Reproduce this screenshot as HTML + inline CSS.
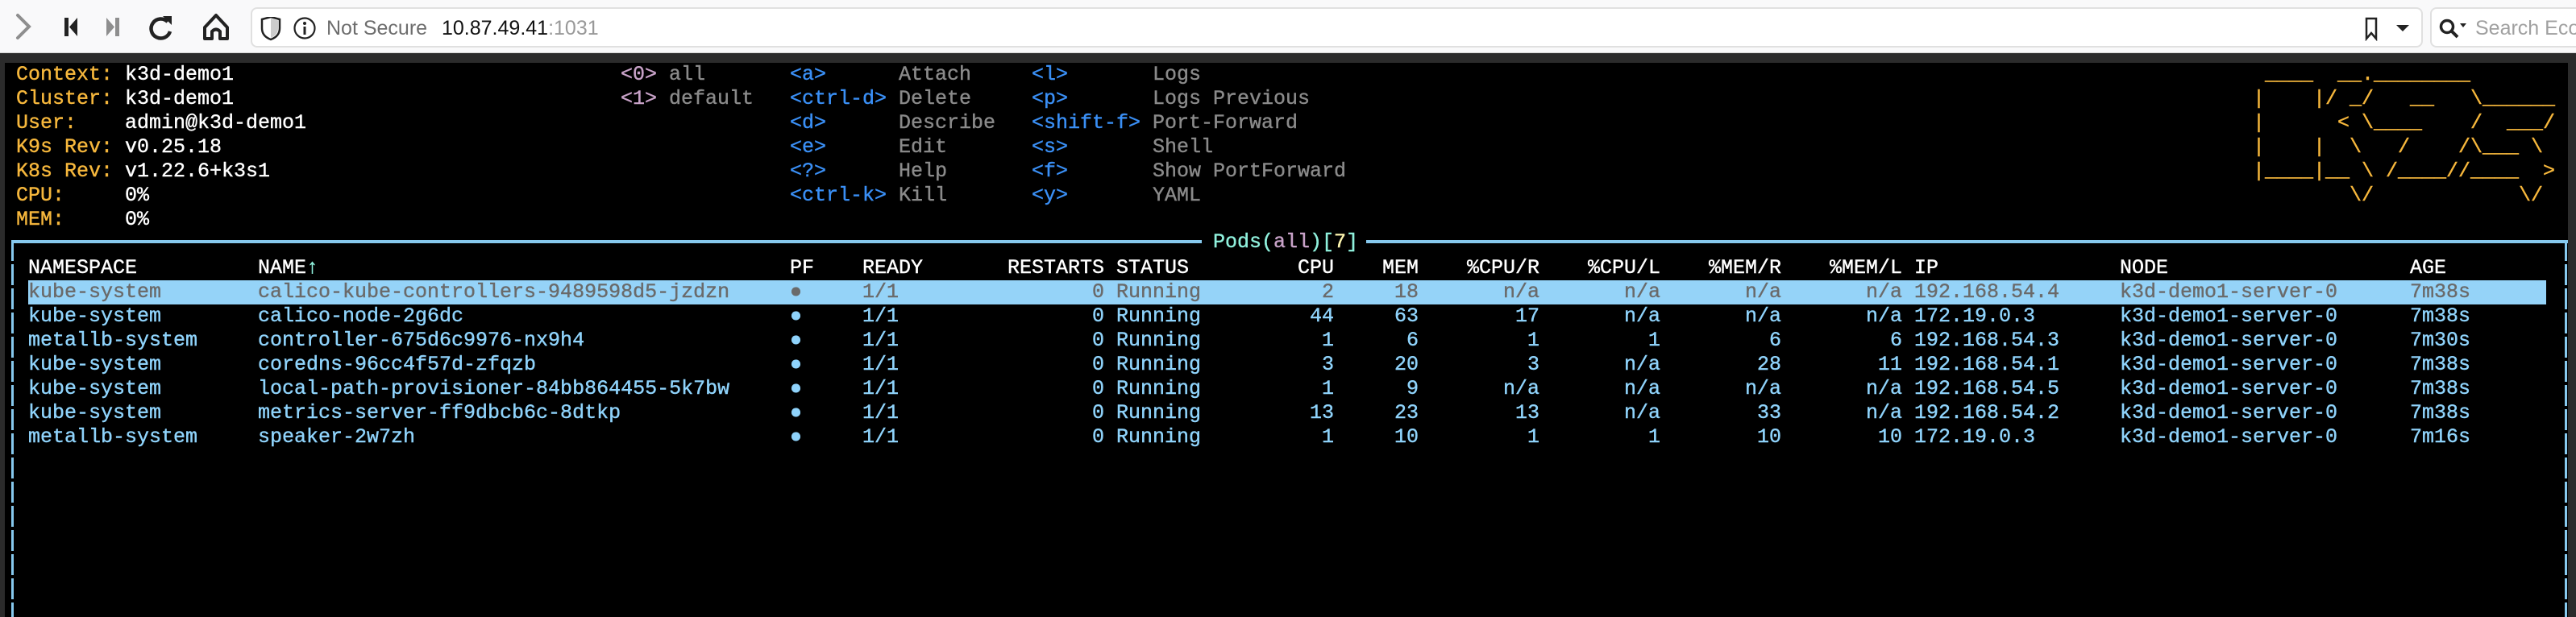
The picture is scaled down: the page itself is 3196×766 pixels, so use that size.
<!DOCTYPE html>
<html><head><meta charset="utf-8"><style>
*{margin:0;padding:0;box-sizing:border-box}
body{width:3196px;height:766px;background:#2b2b2b;position:relative;overflow:hidden;font-family:"Liberation Sans",sans-serif}
.tb{position:absolute;left:0;top:0;width:3196px;height:66px;background:#f9f9fa;border-bottom:1px solid #d4d4d4}
.url{position:absolute;left:311px;top:9px;width:2695px;height:50px;background:#fff;border:2px solid #e0e0e0;border-radius:8px}
.srch{position:absolute;left:3015px;top:9px;width:200px;height:50px;background:#fff;border:2px solid #e0e0e0;border-radius:8px}
.term{position:absolute;left:6px;top:78px;width:3180px;height:688px;background:#000}
.m{position:absolute;font-family:"Liberation Mono",monospace;font-size:25px;line-height:30px;white-space:pre;-webkit-text-stroke:0.4px currentColor}
.o{color:#f6b73c}.w{color:#fff}.p{color:#c8a2c8}.g{color:#8a8a8a}.b{color:#3a8ff5}
.r{position:absolute;left:0;height:30px;width:3196px;font-family:"Liberation Mono",monospace;font-size:25px;line-height:30px;white-space:pre;color:#8fd3fb;-webkit-text-stroke:0.4px currentColor}
.r span{position:absolute;top:0}
.ns{left:35px}.nm{left:320px}.pf{left:980px}.rd{left:1070px}.st{left:1385px}.ip{left:2375px}.nd{left:2630px}.ag{left:2990px}
.rs,.cpu,.mem,.cr,.cl,.mr,.ml{text-align:right;width:150px}
.rs{left:1220px}.cpu{left:1505px}.mem{left:1610px}.cr{left:1760px}.cl{left:1910px}.mr{left:2060px}.ml{left:2210px}
.hd{color:#fff}
</style></head><body>
<div class="tb">
<svg style="position:absolute;left:0;top:0" width="310" height="66">
<path d="M22 19 L36 33 L22 47" stroke="#8e8e8e" stroke-width="4" fill="none" stroke-linecap="round"/>
<rect x="80" y="22" width="5" height="23" fill="#222"/><path d="M96 22 L86 33.5 L96 45 Z" fill="#222"/>
<rect x="143" y="22" width="5" height="23" fill="#8e8e8e"/><path d="M132 22 L142 33.5 L132 45 Z" fill="#8e8e8e"/>
<path d="M208 27 A12 12 0 1 0 211 39" stroke="#222" stroke-width="4.5" fill="none"/><path d="M202 20 L213 20 L213 31 Z" fill="#222"/>
<path d="M254 34 L268 19 L282 34 L282 48 L273 48 L273 39 Q268 34 263 39 L263 48 L254 48 Z" stroke="#222" stroke-width="4" fill="none" stroke-linejoin="round"/>
</svg>
<div class="url">
<svg style="position:absolute;left:10px;top:10px" width="80" height="30">
<path d="M2 3 L13 0 L24 3 L24 14 Q24 24 13 28 Q2 24 2 14 Z" stroke="#222" stroke-width="2.5" fill="none"/><path d="M13 2 L22 4.5 L22 14 Q22 22 13 26 Z" fill="#ccc"/>
<circle cx="55" cy="14" r="12.5" stroke="#222" stroke-width="2.2" fill="none"/><circle cx="55" cy="8" r="2" fill="#222"/><rect x="53.5" y="12" width="3" height="10" fill="#222"/>
</svg>
<div style="position:absolute;left:92px;top:10px;font-size:25px;color:#6d6d6d">Not Secure</div>
<div style="position:absolute;left:235px;top:10px;font-size:25px;color:#111">10.87.49.41<span style="color:#999">:1031</span></div>
<svg style="position:absolute;left:2615px;top:10px" width="70" height="30"><path d="M8 2 L20 2 L20 27 L14 20 L8 27 Z" stroke="#222" stroke-width="2.5" fill="none"/><path d="M45 10 L61 10 L53 18 Z" fill="#222"/></svg>
</div>
<div class="srch">
<svg style="position:absolute;left:8px;top:10px" width="40" height="30"><circle cx="11" cy="12" r="7.5" stroke="#222" stroke-width="3.5" fill="none"/><path d="M16 17 L24 25" stroke="#222" stroke-width="4"/><path d="M27 8 L35 8 L31 13 Z" fill="#222"/></svg>
<div style="position:absolute;left:54px;top:10px;font-size:25px;color:#a0a0a0;white-space:nowrap">Search Eco</div>
</div>
</div>
<div class="term"></div>

<div class="m o" style="left:20px;top:78px">Context:
Cluster:
User:
K9s Rev:
K8s Rev:
CPU:
MEM:</div>
<div class="m w" style="left:155px;top:78px">k3d-demo1
k3d-demo1
admin@k3d-demo1
v0.25.18
v1.22.6+k3s1
0%
0%</div>
<div class="m p" style="left:770px;top:78px">&lt;0&gt;
&lt;1&gt;</div>
<div class="m g" style="left:830px;top:78px">all
default</div>
<div class="m b" style="left:980px;top:78px">&lt;a&gt;
&lt;ctrl-d&gt;
&lt;d&gt;
&lt;e&gt;
&lt;?&gt;
&lt;ctrl-k&gt;</div>
<div class="m g" style="left:1115px;top:78px">Attach
Delete
Describe
Edit
Help
Kill</div>
<div class="m b" style="left:1280px;top:78px">&lt;l&gt;
&lt;p&gt;
&lt;shift-f&gt;
&lt;s&gt;
&lt;f&gt;
&lt;y&gt;</div>
<div class="m g" style="left:1430px;top:78px">Logs
Logs Previous
Port-Forward
Shell
Show PortForward
YAML</div>
<div class="m o" style="left:2795px;top:78px"> ____  __.________
|    |/ _/   __   \______
|      &lt; \____    /  ___/
|    |  \   /    /\___ \
|____|__ \ /____//____  &gt;
        \/            \/</div>

<div style="position:absolute;left:14px;top:298px;width:1477px;height:4px;background:#87c9ee"></div>
<div style="position:absolute;left:1695px;top:298px;width:1491px;height:4px;background:#87c9ee"></div>
<div style="position:absolute;left:14px;top:298px;width:3px;height:468px;background:repeating-linear-gradient(#87c9ee 0 26px,transparent 26px 30px)"></div>
<div style="position:absolute;left:3182px;top:298px;width:3px;height:468px;background:repeating-linear-gradient(#87c9ee 0 26px,transparent 26px 30px)"></div>
<div class="m" style="left:1505px;top:286px;color:#8ff0dc">Pods(<span class="p">all</span>)[<span style="color:#fff7b0">7</span>]</div>

<div class="r hd" style="top:318px"><span class="ns">NAMESPACE</span><span class="nm">NAME<span style="color:#8ff0dc">↑</span></span><span class="pf">PF</span><span class="rd">READY</span><span class="rs">RESTARTS</span><span class="st">STATUS</span><span class="cpu">CPU</span><span class="mem">MEM</span><span class="cr">%CPU/R</span><span class="cl">%CPU/L</span><span class="mr">%MEM/R</span><span class="ml">%MEM/L</span><span class="ip">IP</span><span class="nd">NODE</span><span class="ag">AGE</span></div>
<div style="position:absolute;left:35px;top:348px;width:3124px;height:30px;background:#95d3f8"></div>
<div class="r" style="top:348px;color:#6a6a6a"><span class="ns">kube-system</span><span class="nm">calico-kube-controllers-9489598d5-jzdzn</span><span class="pf">●</span><span class="rd">1/1</span><span class="rs">0</span><span class="st">Running</span><span class="cpu">2</span><span class="mem">18</span><span class="cr">n/a</span><span class="cl">n/a</span><span class="mr">n/a</span><span class="ml">n/a</span><span class="ip">192.168.54.4</span><span class="nd">k3d-demo1-server-0</span><span class="ag">7m38s</span></div>
<div class="r" style="top:378px"><span class="ns">kube-system</span><span class="nm">calico-node-2g6dc</span><span class="pf">●</span><span class="rd">1/1</span><span class="rs">0</span><span class="st">Running</span><span class="cpu">44</span><span class="mem">63</span><span class="cr">17</span><span class="cl">n/a</span><span class="mr">n/a</span><span class="ml">n/a</span><span class="ip">172.19.0.3</span><span class="nd">k3d-demo1-server-0</span><span class="ag">7m38s</span></div>
<div class="r" style="top:408px"><span class="ns">metallb-system</span><span class="nm">controller-675d6c9976-nx9h4</span><span class="pf">●</span><span class="rd">1/1</span><span class="rs">0</span><span class="st">Running</span><span class="cpu">1</span><span class="mem">6</span><span class="cr">1</span><span class="cl">1</span><span class="mr">6</span><span class="ml">6</span><span class="ip">192.168.54.3</span><span class="nd">k3d-demo1-server-0</span><span class="ag">7m30s</span></div>
<div class="r" style="top:438px"><span class="ns">kube-system</span><span class="nm">coredns-96cc4f57d-zfqzb</span><span class="pf">●</span><span class="rd">1/1</span><span class="rs">0</span><span class="st">Running</span><span class="cpu">3</span><span class="mem">20</span><span class="cr">3</span><span class="cl">n/a</span><span class="mr">28</span><span class="ml">11</span><span class="ip">192.168.54.1</span><span class="nd">k3d-demo1-server-0</span><span class="ag">7m38s</span></div>
<div class="r" style="top:468px"><span class="ns">kube-system</span><span class="nm">local-path-provisioner-84bb864455-5k7bw</span><span class="pf">●</span><span class="rd">1/1</span><span class="rs">0</span><span class="st">Running</span><span class="cpu">1</span><span class="mem">9</span><span class="cr">n/a</span><span class="cl">n/a</span><span class="mr">n/a</span><span class="ml">n/a</span><span class="ip">192.168.54.5</span><span class="nd">k3d-demo1-server-0</span><span class="ag">7m38s</span></div>
<div class="r" style="top:498px"><span class="ns">kube-system</span><span class="nm">metrics-server-ff9dbcb6c-8dtkp</span><span class="pf">●</span><span class="rd">1/1</span><span class="rs">0</span><span class="st">Running</span><span class="cpu">13</span><span class="mem">23</span><span class="cr">13</span><span class="cl">n/a</span><span class="mr">33</span><span class="ml">n/a</span><span class="ip">192.168.54.2</span><span class="nd">k3d-demo1-server-0</span><span class="ag">7m38s</span></div>
<div class="r" style="top:528px"><span class="ns">metallb-system</span><span class="nm">speaker-2w7zh</span><span class="pf">●</span><span class="rd">1/1</span><span class="rs">0</span><span class="st">Running</span><span class="cpu">1</span><span class="mem">10</span><span class="cr">1</span><span class="cl">1</span><span class="mr">10</span><span class="ml">10</span><span class="ip">172.19.0.3</span><span class="nd">k3d-demo1-server-0</span><span class="ag">7m16s</span></div>
</body></html>
